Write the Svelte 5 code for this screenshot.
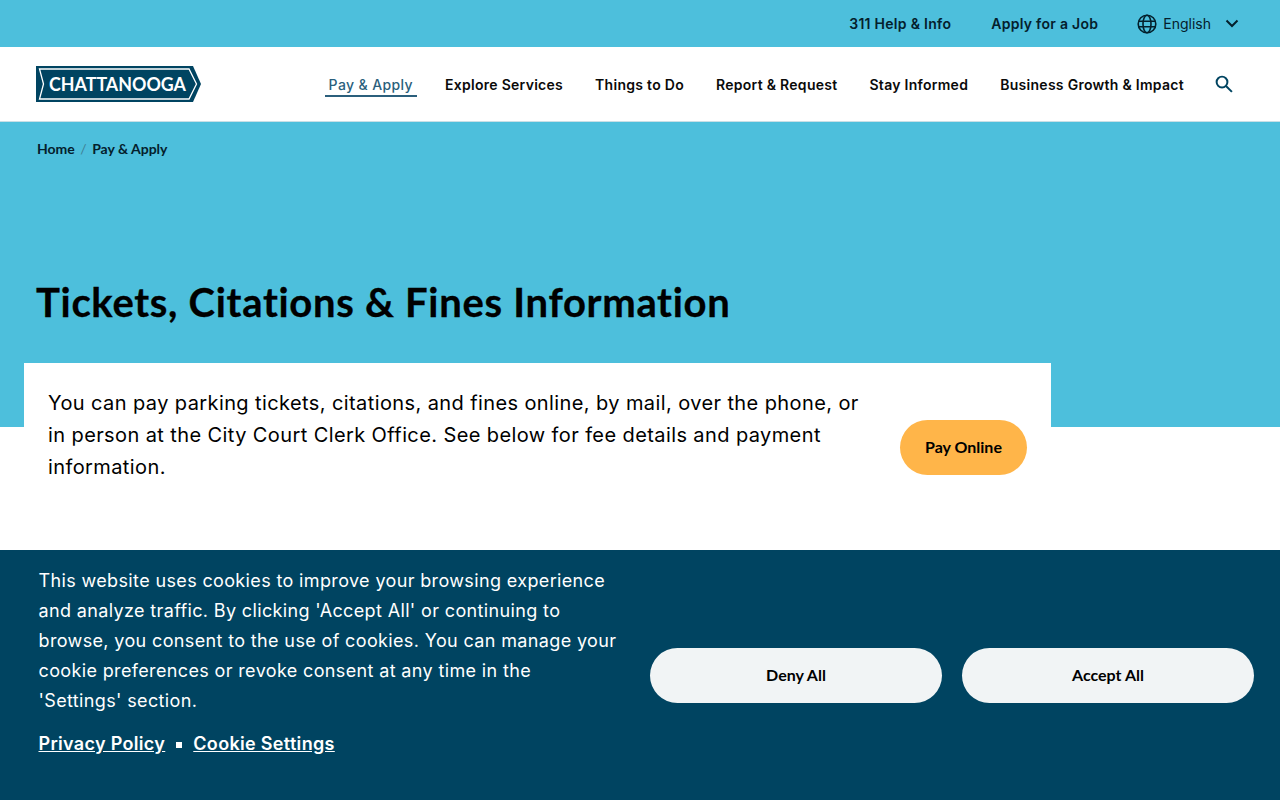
<script lang="ts">
  const navItems = [
    "Pay & Apply",
    "Explore Services",
    "Things to Do",
    "Report & Request",
    "Stay Informed",
    "Business Growth & Impact"
  ];
</script>

<div class="page">
  <div class="topbar">
    <a href="#help" class="top-link">311 Help &amp; Info</a>
    <a href="#job" class="top-link">Apply for a Job</a>
    <div class="lang">
      <svg width="20" height="20" viewBox="0 0 20 20" fill="none" stroke="#04202c" stroke-width="1.6">
        <circle cx="10" cy="10" r="8.8" />
        <ellipse cx="10" cy="10" rx="4" ry="8.8" />
        <path d="M1.8 7.2h16.4M1.8 12.8h16.4" />
      </svg>
      <span>English</span>
      <svg class="chev" width="14" height="9" viewBox="0 0 14 9" fill="none" stroke="#04202c" stroke-width="2">
        <path d="M1.5 1.5 7 7l5.5-5.5" />
      </svg>
    </div>
  </div>

  <header class="header">
    <a href="#home" class="logo" aria-label="Chattanooga">
      <svg width="166" height="37" viewBox="0 0 166 37">
        <path d="M0 0H157L165 18 157 36H0Z" fill="#004461" />
        <path d="M3.5 3H153L160.5 18 153 33H3.5L7.5 18Z" fill="none" stroke="#fff" stroke-width="1.3" />
        <text x="81.5" y="24.5" text-anchor="middle" textLength="137" lengthAdjust="spacingAndGlyphs" class="logo-text">CHATTANOOGA</text>
      </svg>
    </a>
    <nav class="nav">
      {#each navItems as item, i}
        <a href="#nav" class="nav-link" class:active={i === 0}>{item}</a>
      {/each}
    </nav>
    <svg class="search" width="18" height="18" viewBox="0 0 20 20" fill="none" stroke="#004461" stroke-width="2.2">
      <circle cx="7.8" cy="7.8" r="6" />
      <path d="m12.2 12.2 6.6 6.6" />
    </svg>
  </header>

  <section class="hero">
    <div class="crumbs">
      <a href="#home">Home</a>
      <span class="sep">/</span>
      <a href="#pay">Pay &amp; Apply</a>
    </div>
    <h1>Tickets, Citations &amp; Fines Information</h1>
  </section>

  <section class="card">
    <p>You can pay parking tickets, citations, and fines online, by mail, over the phone, or in person at the City Court Clerk Office. See below for fee details and payment information.</p>
    <a href="#pay-online" class="pay-btn">Pay Online</a>
  </section>

  <aside class="cookie">
    <div class="cookie-text">
      <p>This website uses cookies to improve your browsing experience and analyze traffic. By clicking 'Accept All' or continuing to browse, you consent to the use of cookies. You can manage your cookie preferences or revoke consent at any time in the 'Settings' section.</p>
      <div class="cookie-links">
        <a href="#privacy">Privacy Policy</a>
        <span class="dot"></span>
        <a href="#settings">Cookie Settings</a>
      </div>
    </div>
    <div class="cookie-actions">
      <button type="button">Deny All</button>
      <button type="button">Accept All</button>
    </div>
  </aside>
</div>

<style>
  :global(body) {
    margin: 0;
    background: #fff;
  }

  .page {
    min-height: 800px;
    color: #000;
    font-family: Inter, "Liberation Sans", sans-serif;
  }

  a {
    color: inherit;
    text-decoration: none;
  }

  .topbar {
    height: 47px;
    box-sizing: border-box;
    background: #4dbfdc;
    display: flex;
    align-items: center;
    justify-content: flex-end;
    padding: 0 41px 0 0;
    gap: 40px;
    font-size: 14px;
  }

  .top-link {
    font-weight: 600;
    letter-spacing: 0.28px;
    color: #04202c;
  }

  .lang {
    display: flex;
    align-items: center;
    color: #04202c;
    margin-left: -1px;
  }

  .lang span {
    margin-left: 6px;
  }

  .chev {
    margin-left: 14px;
  }

  .header {
    height: 75px;
    box-sizing: border-box;
    display: flex;
    align-items: center;
    padding: 0 47px 0 36px;
    border-bottom: 1px solid #c9dfe6;
  }

  .logo {
    display: flex;
  }

  .logo-text {
    font-family: Lato, sans-serif;
    font-size: 18px;
    font-weight: 700;
    fill: #fff;
  }

  .nav {
    margin-left: auto;
    display: flex;
    align-items: center;
    gap: 24px;
    font-size: 14px;
    font-weight: 600;
  }

  .nav-link {
    padding: 3px 4px 0;
    border-bottom: 2px solid transparent;
    line-height: 20px;
    letter-spacing: 0.28px;
    color: #0a0a0a;
  }

  .nav-link.active {
    color: #2b5f7c;
    font-weight: 500;
    letter-spacing: 0.38px;
    border-bottom-color: #2b5f7c;
  }

  .search {
    margin-left: 27px;
  }

  .hero {
    background: #4dbfdc;
    height: 305px;
    box-sizing: border-box;
    padding: 18px 36px 0;
  }

  .crumbs {
    display: flex;
    align-items: center;
    gap: 5.5px;
    font-family: Lato, sans-serif;
    font-size: 14px;
    font-weight: 700;
    color: #04202c;
    line-height: 17px;
    padding-left: 1px;
    font-variant-ligatures: none;
  }

  .sep {
    color: #3f7f95;
    font-weight: 400;
  }

  h1 {
    margin: 121px 0 0;
    font-family: Lato, sans-serif;
    font-size: 40px;
    line-height: 48px;
    font-weight: 700;
    letter-spacing: 0.7px;
    font-variant-ligatures: none;
    -webkit-text-stroke: 0.3px #000;
    color: #000;
  }

  .card {
    position: relative;
    width: 1027px;
    box-sizing: border-box;
    margin: -64px 0 0 24px;
    padding: 24px;
    background: #fff;
    display: flex;
    align-items: center;
    justify-content: space-between;
    gap: 40px;
  }

  .card p {
    margin: 0;
    width: 820px;
    font-size: 20px;
    line-height: 32px;
    letter-spacing: 0.4px;
  }

  .pay-btn {
    flex: none;
    width: 127px;
    height: 53px;
    padding-bottom: 2px;
    border-radius: 28px;
    background: #ffb549;
    display: flex;
    align-items: center;
    justify-content: center;
    font-family: Lato, sans-serif;
    font-size: 16px;
    font-weight: 700;
    margin-top: 24px;
  }

  .cookie {
    position: fixed;
    left: 0;
    right: 0;
    bottom: 0;
    height: 250px;
    box-sizing: border-box;
    background: #004461;
    color: #fff;
    display: flex;
    align-items: flex-start;
    padding: 16px 26px 0 38.5px;
  }

  .cookie-text {
    width: 579px;
  }

  .cookie-text p {
    margin: 0;
    font-size: 18px;
    line-height: 30px;
    letter-spacing: 0.36px;
  }

  .cookie-links {
    display: flex;
    align-items: center;
    gap: 11px;
    margin-top: 13px;
    font-size: 18px;
    line-height: 30px;
    font-weight: 600;
    letter-spacing: 0.32px;
  }

  .cookie-links a {
    text-decoration: underline;
  }

  .dot {
    width: 6px;
    height: 6px;
    background: #fff;
    margin-top: 2px;
  }

  .cookie-actions {
    margin-left: auto;
    margin-top: 82px;
    display: flex;
    gap: 20px;
  }

  .cookie-actions button {
    width: 292px;
    height: 55px;
    border: 0;
    border-radius: 28px;
    background: #f1f4f5;
    color: #000;
    font-family: Lato, sans-serif;
    font-size: 16px;
    font-weight: 700;
    padding: 0 0 2px;
  }
</style>
